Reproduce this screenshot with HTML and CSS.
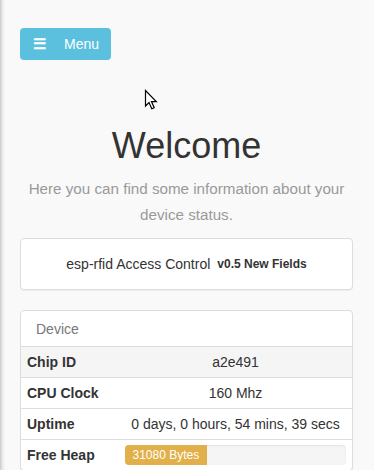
FILE: index.html
```html
<!DOCTYPE html>
<html lang="en">
  <head>
    <meta charset="UTF-8" />
    <meta name="viewport" content="width=device-width" />
    <title>esp-rfid</title>
    <link rel="stylesheet" href="styles.css">
  </head>
  <body>
    <div class="page">
      <button class="menu-btn"><span class="bars">&#9776;</span> Menu</button>

      <h1>Welcome</h1>
      <p class="lead">Here you can find some information about your device status.</p>

      <div class="panel panel-title">
        esp-rfid Access Control <small>v0.5 New Fields</small>
      </div>

      <div class="panel">
        <div class="panel-heading">Device</div>
        <table class="info">
          <tr>
            <th>Chip ID</th>
            <td>a2e491</td>
          </tr>
          <tr>
            <th>CPU Clock</th>
            <td>160 Mhz</td>
          </tr>
          <tr>
            <th>Uptime</th>
            <td>0 days, 0 hours, 54 mins, 39 secs</td>
          </tr>
          <tr>
            <th>Free Heap</th>
            <td>
              <div class="progress">
                <div class="progress-bar" style="width: 37%">31080 Bytes</div>
              </div>
            </td>
          </tr>
        </table>
      </div>
    </div>

    <svg class="cursor" width="14" height="22" viewBox="0 0 14 22">
      <path d="M1.5 1.5 L1.5 17 L5 13.5 L7.8 19.8 L10.2 18.7 L7.5 12.6 L12.3 12.6 Z" fill="#fff" stroke="#000" stroke-width="1.2" stroke-linejoin="miter"/>
    </svg>
  </body>
</html>
```

FILE: styles.css
```css
:root {
  --bg-color: #f9f9f9;
  --border-color: #dddddd;
  --text-color: #333333;
  --muted-color: #999999;
  --info-color: #5bc0de;
  --warning-color: #e2b04a;
}

html,
body {
  margin: 0;
  height: 100%;
}

body {
  font-family: "Liberation Sans", Arial, sans-serif;
  font-size: 14px;
  color: var(--text-color);
  background: linear-gradient(to right, #c8c8c8 0, #e6e6e6 2px, var(--bg-color) 5px);
  overflow: hidden;
}

.page {
  padding: 28px 21px 0 20px;
}

.menu-btn {
  display: flex;
  align-items: center;
  width: 91px;
  height: 32px;
  padding: 0 0 0 13px;
  border: 0;
  border-radius: 4px;
  background-color: var(--info-color);
  color: #ffffff;
  font-family: inherit;
  font-size: 14px;
  cursor: pointer;
}

.bars {
  font-size: 15px;
  font-weight: bold;
  margin-right: 18px;
}

h1 {
  margin: 66px 0 0;
  font-size: 36px;
  font-weight: normal;
  line-height: 40px;
  text-align: center;
}

.lead {
  margin: 10px 0 0;
  font-size: 15.2px;
  line-height: 26px;
  color: var(--muted-color);
  text-align: center;
}

.panel {
  background-color: #ffffff;
  border: 1px solid var(--border-color);
  border-radius: 4px;
  box-shadow: 0 1px 1px rgba(0, 0, 0, 0.05);
}

.panel-title {
  margin-top: 10px;
  height: 50px;
  display: flex;
  align-items: center;
  justify-content: center;
  font-size: 14px;
}

.panel-title small {
  margin-left: 7px;
  font-size: 12px;
  font-weight: bold;
}

.panel + .panel {
  margin-top: 20px;
}

.panel-heading {
  height: 35px;
  padding: 0 15px;
  display: flex;
  align-items: center;
  color: #777777;
  font-size: 14px;
  border-bottom: 1px solid var(--border-color);
}

.info {
  width: 100%;
  border-collapse: collapse;
}

.info th,
.info td {
  height: 30px;
  padding: 0 6px;
  border-top: 1px solid var(--border-color);
}

.info tr:first-child th,
.info tr:first-child td {
  border-top: 0;
}

.info tr:first-child {
  background-color: #f5f5f5;
}

.info th {
  width: 86px;
  text-align: left;
  font-weight: bold;
}

.info td {
  text-align: center;
}

.progress {
  height: 20px;
  background-color: #f5f5f5;
  border-radius: 4px;
  overflow: hidden;
  box-shadow: inset 0 1px 2px rgba(0, 0, 0, 0.08);
}

.progress-bar {
  height: 100%;
  background-color: var(--warning-color);
  color: #ffffff;
  font-size: 12px;
  line-height: 20px;
  text-align: center;
}

.cursor {
  position: absolute;
  left: 144px;
  top: 89px;
}
```
